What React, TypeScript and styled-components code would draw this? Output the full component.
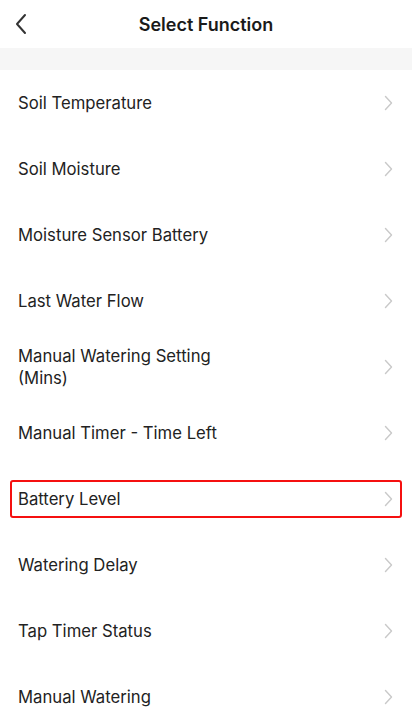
import React from "react";
import styled, { createGlobalStyle } from "styled-components";

const GlobalStyle = createGlobalStyle`
    html, body {
        margin: 0;
        padding: 0;
        background: #ffffff;
        font-family: Inter, "Liberation Sans", Arial, sans-serif;
        color: #1f1f1f;
    }
`

const functions = [
    "Soil Temperature",
    "Soil Moisture",
    "Moisture Sensor Battery",
    "Last Water Flow",
    "Manual Watering Setting\n(Mins)",
    "Manual Timer - Time Left",
    "Battery Level",
    "Watering Delay",
    "Tap Timer Status",
    "Manual Watering",
]

export default function App()
{
    return(
        <Page>
            <GlobalStyle/>
            <Header>
                <BackButton>
                    <svg width="14" height="22" viewBox="0 0 14 22">
                        <path d="M11 2 L3 11 L11 20" fill="none" stroke="#333" strokeWidth="2" strokeLinecap="round" strokeLinejoin="round"/>
                    </svg>
                </BackButton>
                <Title>Select Function</Title>
            </Header>
            <Band/>
            <List>
                {functions.map((label, i) => (
                    <Row key={label}>
                        <Item $highlight={i === 6}>
                            <Label>{label}</Label>
                            <svg width="9" height="16" viewBox="0 0 9 16">
                                <path d="M1.5 1.5 L7.5 8 L1.5 14.5" fill="none" stroke="#c9c9c9" strokeWidth="1.4" strokeLinecap="round" strokeLinejoin="round"/>
                            </svg>
                        </Item>
                    </Row>
                ))}
            </List>
        </Page>
    )
}

const Page = styled.div`
    width: 412px;
    min-height: 711px;
    background: #fff;
`
const Header = styled.div`
    position: relative;
    height: 48px;
    display: flex;
    align-items: center;
    justify-content: center;
`
const BackButton = styled.div`
    position: absolute;
    left: 14px;
    top: 13px;
    display: flex;
`
const Title = styled.div`
    font-size: 18px;
    font-weight: 600;
    color: #1a1a1a;
`
const Band = styled.div`
    height: 22px;
    background: #f6f6f6;
`
const List = styled.div`
    display: flex;
    flex-direction: column;
`
const Row = styled.div`
    height: 66px;
    display: flex;
    align-items: center;
    padding: 0 10px;
`
const Item = styled.div<{ $highlight?: boolean }>`
    flex: 1;
    min-height: 34px;
    display: flex;
    align-items: center;
    justify-content: space-between;
    padding: 0 7px 0 6px;
    border: 2px solid ${p => p.$highlight ? '#f51010' : 'transparent'};
    border-radius: 3px;
`
const Label = styled.div`
    font-size: 16.7px;
    line-height: 22px;
    color: #222;
    white-space: pre-line;
`
